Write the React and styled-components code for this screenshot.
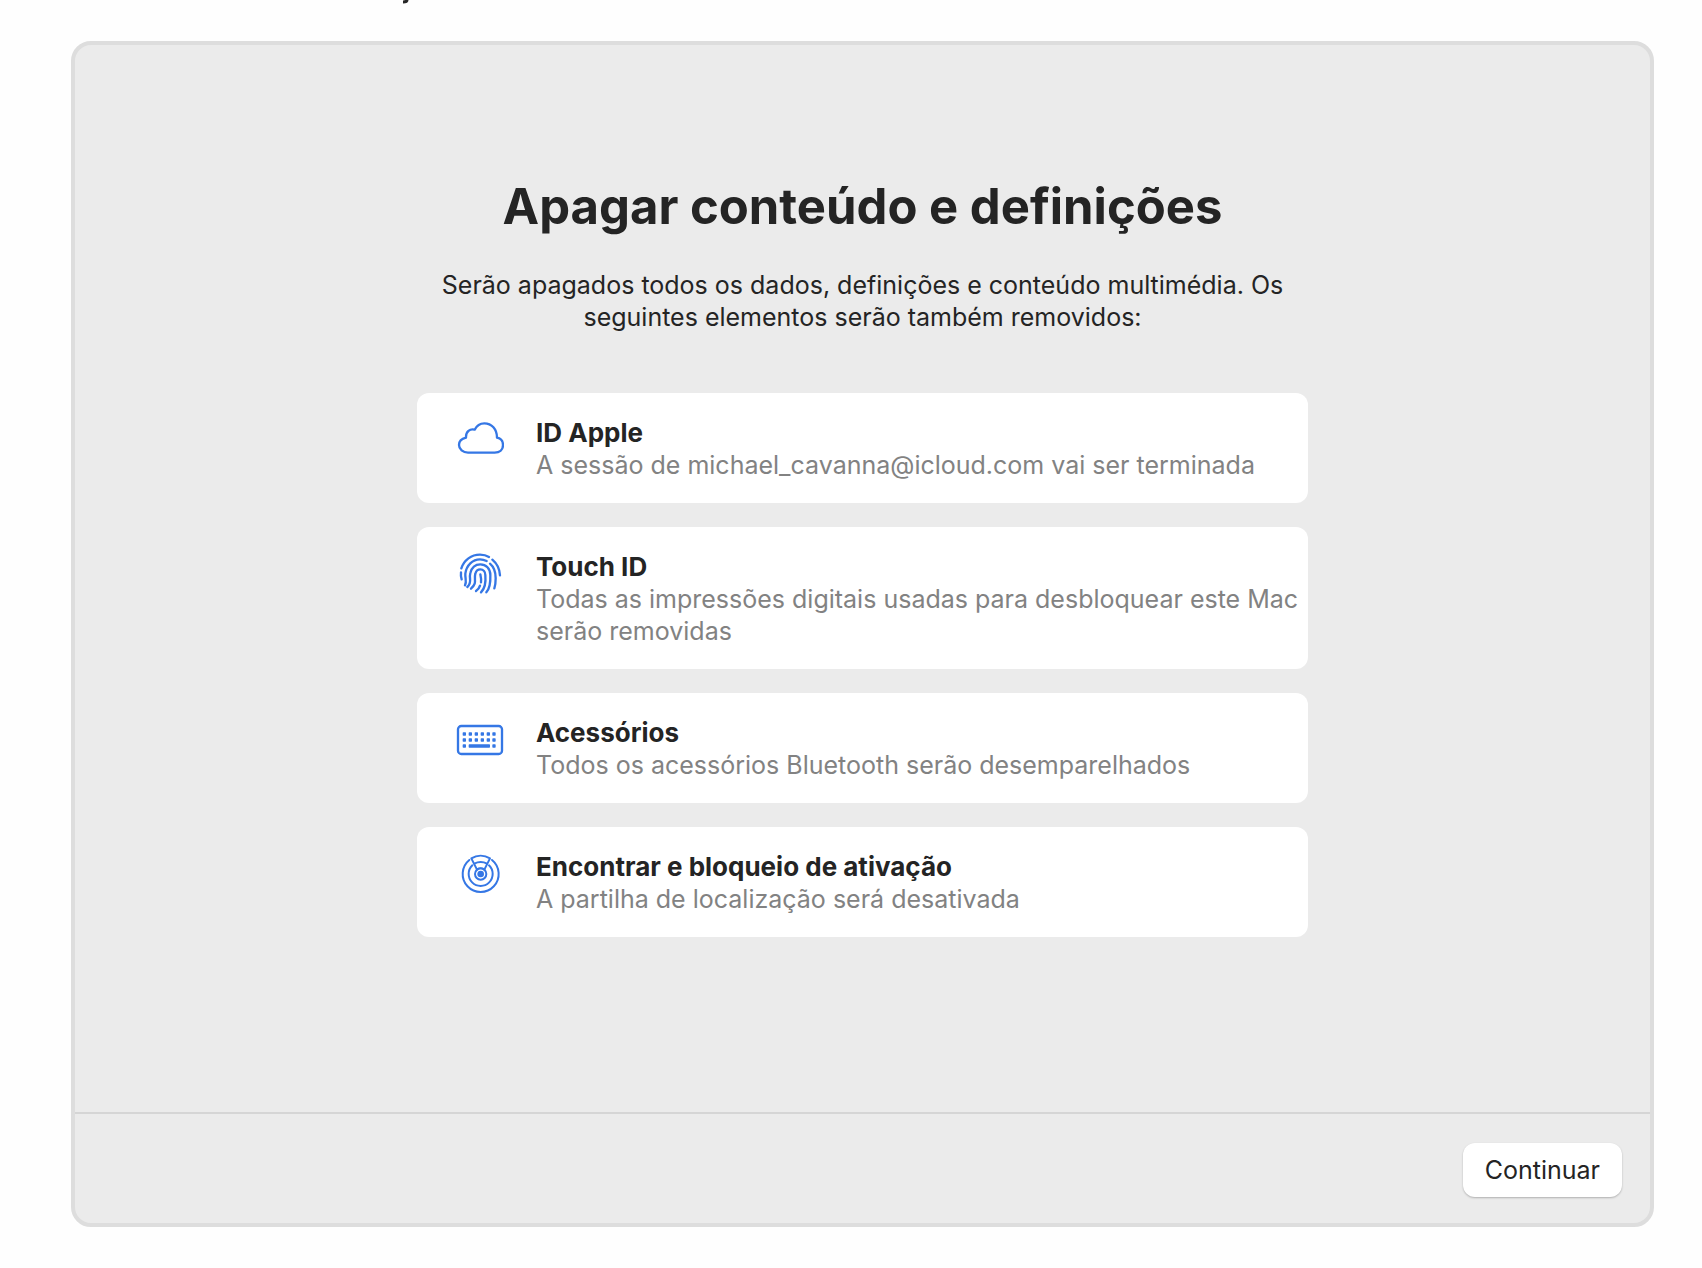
import React from 'react';
import styled, { createGlobalStyle } from 'styled-components';

function CloudIcon() {
  return (
    <Icon viewBox="48 36 144 144" aria-hidden="true">
      <path
        d="M84 143H164C179 143 189 134 189 120C189 109 182 100 171 98C171 72 155 55 133 55C120 55 110 62 104 74C90 70 77 80 78 98C65 101 57 109 57 120C57 133 69 143 84 143Z"
        strokeWidth="7"
      />
    </Icon>
  );
}

function FingerprintIcon() {
  return (
    <Icon viewBox="48 33 144 144" aria-hidden="true">
      <g strokeWidth="7">
        <path d="M64 85C72 60 94 44 120 44C130 44 139 46 147 51" />
        <path d="M157 59C170 70 179 86 180 106" />
        <path d="M63 97C62 104 63 111 65 118" />
        <path d="M75 136C81 125 75 115 76 101C79 76 98 58 120 58C128 58 134 60 140 63" />
        <path d="M150 71C163 82 167 98 167 115C167 128 166 137 163 145" />
        <path d="M82 141C98 127 86 117 91 99C95 83 106 73 121 73C138 73 151 86 151 105C152 127 151 143 139 157" />
        <path d="M93 146C113 129 101 119 106 101C108 93 114 88 121 88C130 88 136 95 136 105C138 127 137 143 123 157" />
        <path d="M121 103C123 112 124 119 123 127" />
        <path d="M120 137C118 144 114 149 108 153" />
      </g>
    </Icon>
  );
}

function KeyboardIcon() {
  const cols = [68, 86, 104, 122, 140, 157];
  return (
    <Icon viewBox="48 36 144 144" aria-hidden="true">
      <rect x="54" y="63" width="132" height="84" rx="10" strokeWidth="7" />
      <g fill="#3577e5" stroke="none">
        {cols.map((x) => (
          <React.Fragment key={x}>
            <rect x={x} y="82" width="10" height="10" rx="2" />
            <rect x={x} y="100" width="10" height="10" rx="2" />
          </React.Fragment>
        ))}
        <rect x="68" y="118" width="10" height="10" rx="2" />
        <rect x="86" y="118" width="64" height="10" rx="2" />
        <rect x="157" y="118" width="10" height="10" rx="2" />
      </g>
    </Icon>
  );
}

function FindMyIcon() {
  return (
    <Icon viewBox="48 36 144 144" aria-hidden="true">
      <g strokeWidth="6">
        <path d="M88 63A54 54 0 1 0 156 63" />
        <path d="M97 79A36 36 0 1 0 147 79" />
        <path d="M94 58C111 48 133 48 150 58L133 92C127 87 117 87 111 92Z" />
        <path d="M103 74C115 68 129 68 141 74" />
        <circle cx="122" cy="105" r="17" />
      </g>
      <circle cx="122" cy="105" r="10" fill="#3577e5" stroke="none" />
    </Icon>
  );
}

const items = [
  {
    icon: CloudIcon,
    title: 'ID Apple',
    text: 'A sessão de michael_cavanna@icloud.com vai ser terminada',
  },
  {
    icon: FingerprintIcon,
    title: 'Touch ID',
    text: 'Todas as impressões digitais usadas para desbloquear este Mac serão removidas',
  },
  {
    icon: KeyboardIcon,
    title: 'Acessórios',
    text: 'Todos os acessórios Bluetooth serão desemparelhados',
  },
  {
    icon: FindMyIcon,
    title: 'Encontrar e bloqueio de ativação',
    text: 'A partilha de localização será desativada',
  },
];

function App() {
  return (
    <Page>
      <GlobalStyle />
      <TopStrip>
        <svg width="8" height="4" viewBox="0 0 8 4" aria-hidden="true">
          <path d="M5 0C5 1 4 2 1 2" fill="none" stroke="#262626" strokeWidth="3" />
        </svg>
      </TopStrip>
      <Window>
        <Content>
          <Title>Apagar conteúdo e definições</Title>
          <Intro>
            Serão apagados todos os dados, definições e conteúdo multimédia. Os
            seguintes elementos serão também removidos:
          </Intro>
          <List>
            {items.map(({ icon: ItemIcon, title, text }) => (
              <Item key={title}>
                <ItemIcon />
                <ItemText>
                  <h2>{title}</h2>
                  <p>{text}</p>
                </ItemText>
              </Item>
            ))}
          </List>
        </Content>
        <Footer>
          <ContinueButton type="button">Continuar</ContinueButton>
        </Footer>
      </Window>
    </Page>
  );
}

export default App;

const GlobalStyle = createGlobalStyle`
  * {
    box-sizing: border-box;
  }

  body {
    margin: 0;
    background: #fefefe;
    color: #242424;
    font-family: Inter, "Liberation Sans", sans-serif;
    font-size: 25px;
    line-height: 32px;
  }

  h1, h2, p, ul {
    margin: 0;
    padding: 0;
  }
`;

const Page = styled.div`
  min-height: 100vh;
  display: flex;
  flex-direction: column;
  padding: 0 48px 41px 71px;
`;

const TopStrip = styled.div`
  height: 41px;
  padding-left: 331px;

  svg {
    display: block;
  }
`;

const Window = styled.main`
  flex: 1;
  display: flex;
  flex-direction: column;
  border: 4px solid #dddddd;
  border-radius: 20px;
  background: #ebebeb;
`;

const Content = styled.section`
  flex: 1;
  display: flex;
  flex-direction: column;
  align-items: center;
  padding: 132px 24px 48px;
`;

const Title = styled.h1`
  font-size: 49px;
  line-height: 60px;
  font-weight: 700;
  text-align: center;
`;

const Intro = styled.p`
  max-width: 880px;
  margin-top: 32px;
  text-align: center;
`;

const List = styled.ul`
  width: 100%;
  max-width: 891px;
  margin-top: 60px;
  display: flex;
  flex-direction: column;
  gap: 24px;
  list-style: none;
`;

const Item = styled.li`
  display: flex;
  align-items: flex-start;
  gap: 32px;
  padding: 24px 0 22px 39px;
  border-radius: 12px;
  background: #ffffff;
`;

const Icon = styled.svg`
  flex: none;
  width: 48px;
  height: 48px;
  fill: none;
  stroke: #3577e5;
  stroke-linecap: round;
  stroke-linejoin: round;
`;

const ItemText = styled.div`
  flex: 1;

  h2 {
    font-size: 26px;
    line-height: 32px;
    font-weight: 700;
  }

  p {
    color: #828282;
  }
`;

const Footer = styled.footer`
  display: flex;
  justify-content: flex-end;
  padding: 29px 28px 26px;
  border-top: 2px solid #d5d5d5;
`;

const ContinueButton = styled.button`
  height: 54px;
  padding: 0 22px;
  border: 0;
  border-radius: 12px;
  background: #ffffff;
  box-shadow: 0 1px 2px rgba(0, 0, 0, 0.25);
  color: #242424;
  font: inherit;
  cursor: pointer;
`;
